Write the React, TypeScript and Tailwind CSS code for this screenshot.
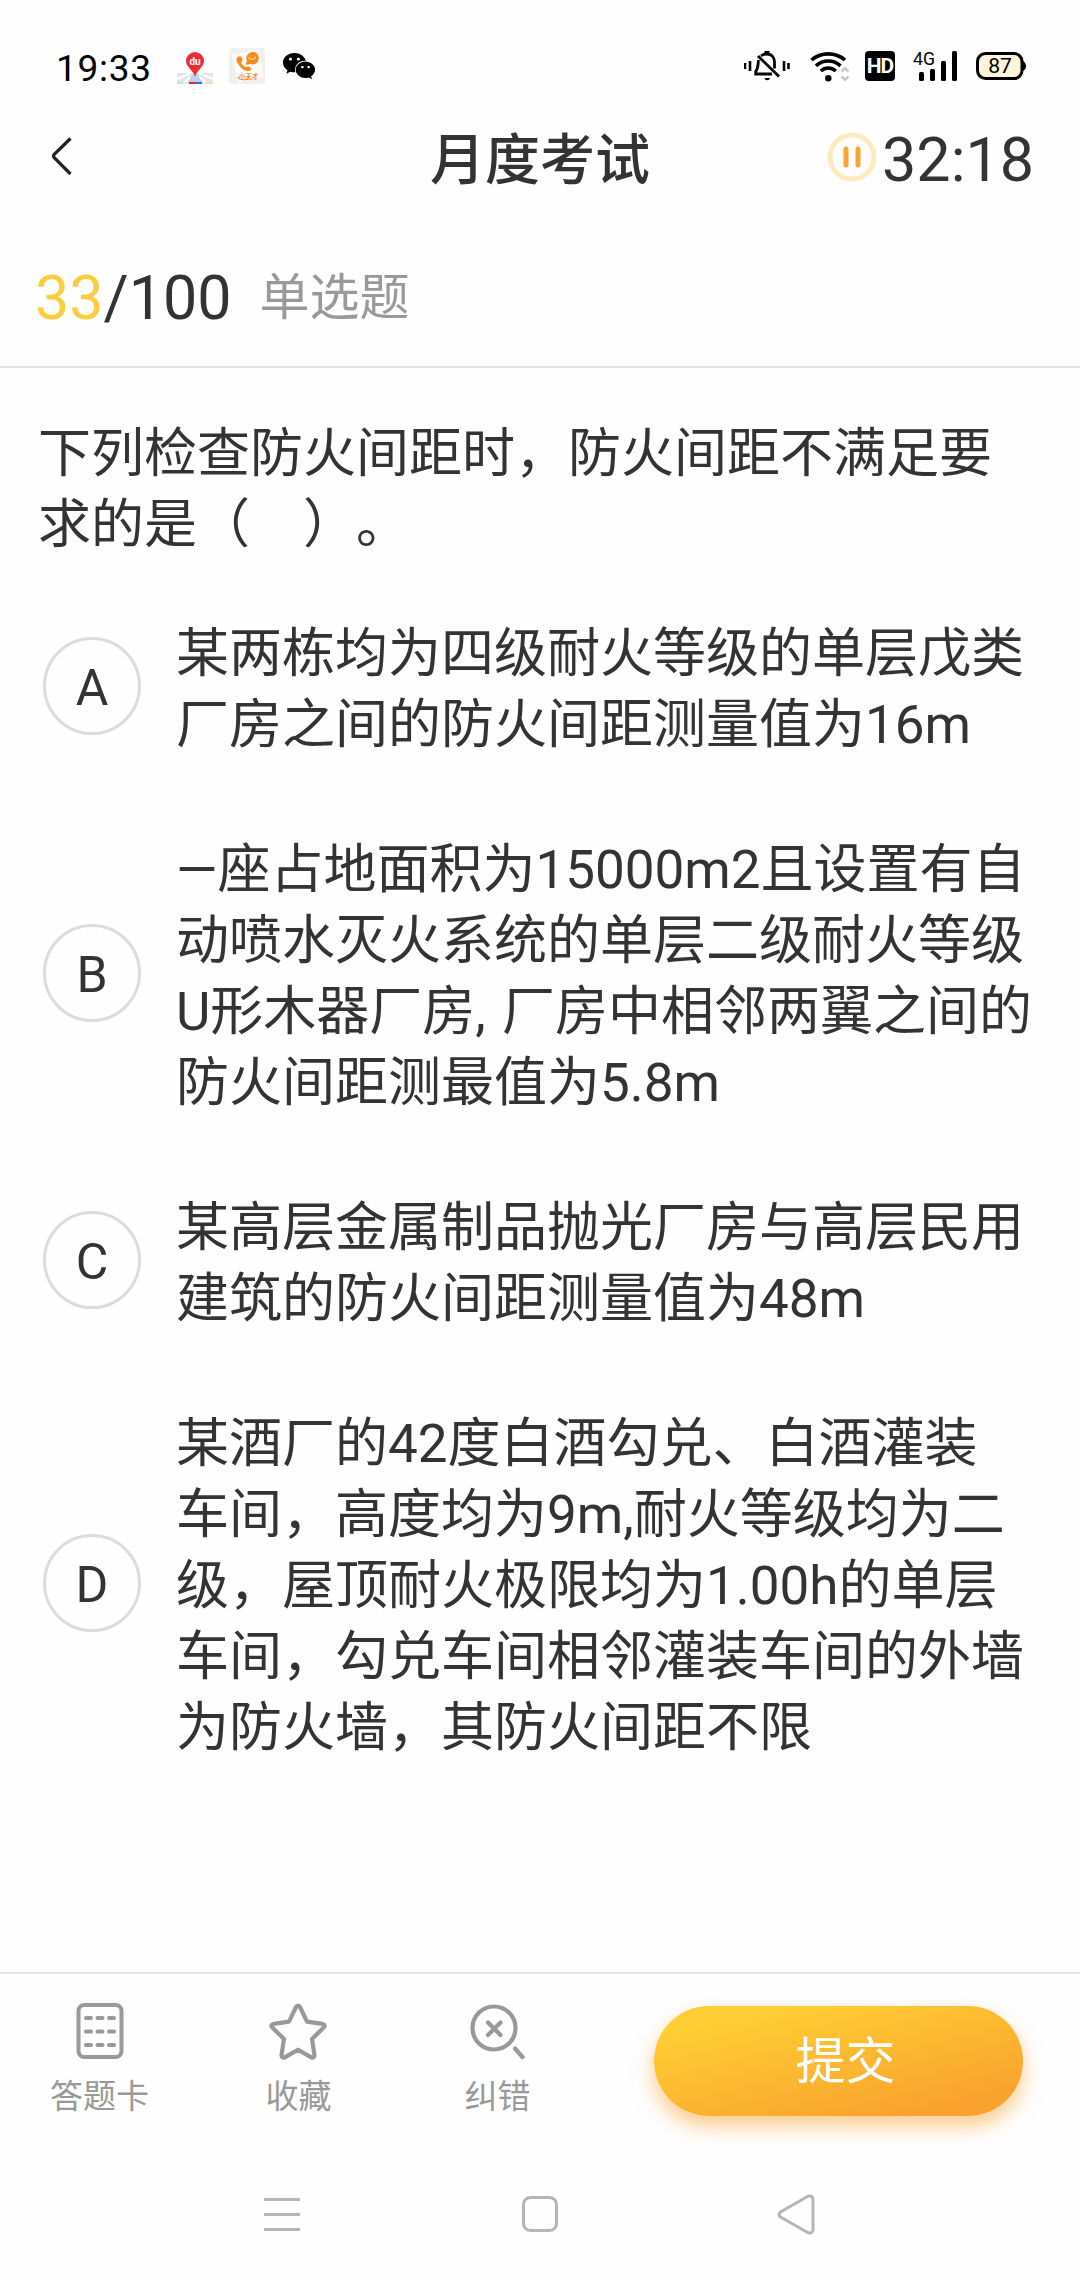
import type { ReactNode } from "react";
import { FaWeixin } from "react-icons/fa";

type Option = {
  key: string;
  lines: string[];
};

const questionLines = ["下列检查防火间距时，防火间距不满足要", "求的是（　）。"];

const options: Option[] = [
  {
    key: "A",
    lines: ["某两栋均为四级耐火等级的单层戊类", "厂房之间的防火间距测量值为16m"],
  },
  {
    key: "B",
    lines: [
      "—座占地面积为15000m2且设置有自",
      "动喷水灭火系统的单层二级耐火等级",
      "U形木器厂房, 厂房中相邻两翼之间的",
      "防火间距测最值为5.8m",
    ],
  },
  {
    key: "C",
    lines: ["某高层金属制品抛光厂房与高层民用", "建筑的防火间距测量值为48m"],
  },
  {
    key: "D",
    lines: [
      "某酒厂的42度白酒勾兑、白酒灌装",
      "车间，高度均为9m,耐火等级均为二",
      "级，屋顶耐火极限均为1.00h的单层",
      "车间，勾兑车间相邻灌装车间的外墙",
      "为防火墙，其防火间距不限",
    ],
  },
];

function MapIcon() {
  return (
    <svg width="36" height="36" viewBox="0 0 36 36">
      <path d="M0 25h36v11H0z" fill="#e4e5ea" />
      <path d="M0 31L14 25M36 31L22 25M5 36l10-8M31 36l-10-8" stroke="#fff" strokeWidth="2" />
      <path d="M0 34h8l-2 2H0z" fill="#bfe3f2" />
      <path d="M28 34h8v2h-7z" fill="#d6ecc0" />
      <path d="M15 26h6l4 9H11z" fill="#b4d6ea" />
      <path d="M12 34h6v2h-6z" fill="#e3262e" />
      <path d="M18 34h7v2h-7z" fill="#2f6fe0" />
      <path d="M18 29C17 23 9 19 9 13a9 9 0 0 1 18 0c0 6-8 10-9 16z" fill="#ee2b33" />
      <text x="18" y="17" textAnchor="middle" fontSize="10" fontWeight="700" fill="#fff" fontFamily="Roboto, sans-serif">
        du
      </text>
    </svg>
  );
}

function WatchIcon() {
  return (
    <svg width="36" height="36" viewBox="0 0 36 36">
      <rect width="36" height="36" rx="3" fill="#f0f1ec" />
      <path d="M3 7L30 1l5 27-26 7z" fill="#fbfbf8" />
      <path
        d="M7.5 10.500c1.500-2.500 4.500-3 5.500-.5 1 2.300 0 3.500-1 4.500 1 2.500 3 4 5 4.500 2-1.500 5.500.5 5.500 2.500-3 3-8.500 1-11.500-3-2.500-3-4-5.500-3.500-8z"
        fill="#f98a1c"
      />
      <path d="M23 4a6.200 6.200 0 1 1-1.500 12l-5 .8 1.500-4A6.200 6.200 0 0 1 23 4z" fill="#f98a1c" />
      <path d="M19.500 9.500c1.500 2.500 5.500 2.500 7.500-.5" stroke="#fff" strokeWidth="1" fill="none" />
      <text x="19.500" y="30.500" textAnchor="middle" fontSize="6.500" fontWeight="700" fill="#f28a2a" fontFamily="Noto Sans CJK SC, sans-serif">
        小天才
      </text>
      <path d="M8 29c2 3 8 3.500 12 2" stroke="#f28a2a" strokeWidth="1" fill="none" />
    </svg>
  );
}

function MutedBellIcon() {
  return (
    <svg width="46" height="30" viewBox="0 0 46 30" fill="none" stroke="#000">
      <path d="M1 12v6M6 10v10M40 10v10M44.500 12v6" strokeWidth="2.600" />
      <path d="M17 4.800C19 3.400 21 3 22.800 3c5.200 0 7.700 3.800 7.700 8v6.500M14.500 9c-.6 5-.2 8-2.800 11.500V23H28" strokeWidth="2.800" />
      <path d="M20.500 1.500h5" strokeWidth="3" />
      <path d="M14 5l21 20.500" strokeWidth="2.800" />
      <path d="M20.500 27h5.500a2.800 2.800 0 0 1-5.500 0z" fill="#000" stroke="none" />
    </svg>
  );
}

function WifiIcon() {
  return (
    <svg width="40" height="31" viewBox="0 0 40 31" fill="none">
      <path d="M1.500 9C11 .8 25.500.8 35 9" stroke="#000" strokeWidth="3.600" />
      <path d="M6 14.800c7-6.400 17.500-6.400 24.500 0" stroke="#000" strokeWidth="3.600" />
      <path d="M10.800 20c4.500-4 10.500-4 15 0" stroke="#000" strokeWidth="3.600" />
      <circle cx="18.300" cy="27.200" r="3.200" fill="#000" />
      <path d="M31.500 20.500l3.500-3.200 3.500 3.200M31.500 25.500l3.500 3.200 3.500-3.200" stroke="#c8c8c8" strokeWidth="2.600" />
    </svg>
  );
}

function SignalIcon() {
  return (
    <svg width="45" height="38" viewBox="0 -4 45 38">
      <text x="0" y="14" fontSize="18.500" textLength="22" lengthAdjust="spacingAndGlyphs" fontFamily="Roboto, sans-serif">
        4G
      </text>
      <rect x="6" y="21" width="5" height="9" rx="1.500" />
      <rect x="17" y="18" width="5" height="12" rx="1.500" />
      <rect x="28" y="10" width="5" height="20" rx="1.500" />
      <rect x="39" y="0" width="5" height="30" rx="1.500" />
    </svg>
  );
}

function BatteryIcon() {
  return (
    <svg width="50" height="28" viewBox="0 0 50 28">
      <rect x="1.500" y="1.500" width="44.500" height="25" rx="8" fill="#fff4dc" stroke="#000" strokeWidth="3" />
      <path d="M47 9c4 2 4 8 0 10z" />
      <text x="24" y="21" textAnchor="middle" fontSize="21" fontFamily="Roboto, sans-serif">
        87
      </text>
    </svg>
  );
}

function StatusBar() {
  return (
    <div className="flex h-[132px] items-center pr-[54px] pl-[56px]">
      <span className="w-[121px] pt-1 text-[37px] leading-none tracking-[0.7px] text-black">19:33</span>
      <MapIcon />
      <span className="ml-4">
        <WatchIcon />
      </span>
      <FaWeixin className="ml-[17px] h-[30px] w-[34px] text-black" />
      <div className="ml-auto flex items-center">
        <MutedBellIcon />
        <span className="ml-5">
          <WifiIcon />
        </span>
        <span className="ml-[15px] flex size-[30px] items-center justify-center rounded-[4px] bg-black text-[21px] leading-none font-bold tracking-[-1px] text-white">
          HD
        </span>
        <span className="ml-[18px]">
          <SignalIcon />
        </span>
        <span className="ml-[18px]">
          <BatteryIcon />
        </span>
      </div>
    </div>
  );
}

function Header() {
  return (
    <header className="-mt-0.5 grid h-[54px] grid-cols-3 items-center pr-[46px] pl-[48px]">
      <svg className="mb-3.5" width="24" height="40" viewBox="0 0 24 40" fill="none" stroke="#222" strokeWidth="3.200">
        <path d="M22.500 2.500L6 18.500a2.500 2.500 0 0 0 0 3L22.500 38" />
      </svg>
      <h1 className="pr-0.5 pb-1 text-center text-[55px] leading-none font-medium">月度考试</h1>
      <div className="flex items-center justify-end gap-1.5 pb-1">
        <svg className="mb-2" width="50" height="50" viewBox="0 0 50 50">
          <circle cx="26" cy="25" r="22" fill="none" stroke="#fdebc0" strokeWidth="5" />
          <path d="M20 17v16M32 17v16" stroke="#f6a731" strokeWidth="5" strokeLinecap="round" />
        </svg>
        <span className="text-[61px] leading-none">32:18</span>
      </div>
    </header>
  );
}

function OptionRow({ option }: { option: Option }) {
  return (
    <li className="flex items-center">
      <span className="mb-1 flex size-[98px] shrink-0 items-center justify-center rounded-full border-[3px] border-[#dcdcdc] pt-1 text-[50px] leading-none">
        {option.key}
      </span>
      <p className="ml-[35px] text-[53px] leading-[71px] whitespace-nowrap [word-spacing:3px]">
        {option.lines.map((line) => (
          <span key={line} className="block translate-y-[2px]">
            {line}
          </span>
        ))}
      </p>
    </li>
  );
}

function ToolButton({ label, children }: { label: string; children: ReactNode }) {
  return (
    <button className="flex w-[199px] flex-col items-center gap-4 text-[33px] leading-[40px] text-[#999]">
      {children}
      {label}
    </button>
  );
}

function BottomBar() {
  return (
    <footer className="flex h-[166px] border-t-2 border-[#e4e4e4] pt-[29px]">
      <div className="flex">
        <ToolButton label="答题卡">
          <svg width="58" height="58" viewBox="0 0 58 58" fill="none" stroke="#999" strokeWidth="4">
            <rect x="7.500" y="2" width="43" height="52" rx="6" />
            <path d="M15 15h5M26.500 15h5M38 15h5M15 28.500h5M26.500 28.500h5M38 28.500h5M15 42h5M26.500 42h5M38 42h5" strokeLinecap="round" />
          </svg>
        </ToolButton>
        <ToolButton label="收藏">
          <svg className="-ml-0.5" width="58" height="58" viewBox="0 0 58 58" fill="none" stroke="#999" strokeWidth="4.200" strokeLinejoin="round">
            <path d="M27 4q2-3 4 0l7 14.700 15.500 2.200q3.500 1 1.200 3.600L43 36 45.500 52.200q0 3-3.200 2.200L29 46.700 15.700 54.400q-3.200.8-3.200-2.200L15 36 3.300 24.500q-2.300-2.600 1.200-3.600L20 18.700z" />
          </svg>
        </ToolButton>
        <ToolButton label="纠错">
          <svg width="58" height="58" viewBox="0 0 58 58" fill="none" stroke="#999" strokeWidth="4.200" strokeLinecap="round">
            <circle cx="25" cy="25" r="21.500" />
            <path d="M19 19.500l12.500 12.500M31.500 19.500L19 32M46 45.500l7.500 8.500" />
          </svg>
        </ToolButton>
      </div>
      <button className="mt-[3px] ml-[57px] flex h-[110px] w-[369px] items-center justify-center rounded-full bg-[linear-gradient(167deg,#ffce34_15%,#f9a32e_85%)] pt-0.5 pl-3.5 text-[50px] leading-none text-white shadow-[0_10px_20px_rgba(249,163,46,0.55)]">
        提交
      </button>
    </footer>
  );
}

function SystemNav() {
  return (
    <nav className="flex h-[142px] items-center justify-between pt-[12px] pr-[265px] pl-[263px]">
      <svg width="38" height="42" viewBox="0 0 38 42" stroke="#b5b5b5" strokeWidth="3">
        <path d="M1 5.500h36M1 20.500h36M1 35.500h36" />
      </svg>
      <svg width="38" height="42" viewBox="0 0 38 42" fill="none" stroke="#b5b5b5" strokeWidth="3">
        <rect x="3.500" y="3.500" width="33" height="33" rx="7" />
      </svg>
      <svg width="38" height="42" viewBox="0 0 38 42" fill="none" stroke="#b5b5b5" strokeWidth="3">
        <path d="M31 2.300L3.500 18q-3 2.500 0 5L31 38.700q4.500 1.300 5-3V5.300q-.5-4.300-5-3z" />
      </svg>
    </nav>
  );
}

export default function App() {
  return (
    <div className="flex h-[2280px] w-[1080px] flex-col overflow-hidden bg-[#fefefe] font-[Roboto,'Noto_Sans_CJK_SC',sans-serif] text-[#333] [text-spacing-trim:space-all]">
      <StatusBar />
      <Header />
      <div className="flex h-[184px] items-center border-b-2 border-[#e2e2e2] pt-[46px] pl-[35px] leading-none">
        <span className="text-[61px]">
          <span className="text-[#fccd3e]">33</span>/100
        </span>
        <span className="ml-7 text-[50px] text-[#999]">单选题</span>
      </div>
      <main className="flex-1 pt-[51px] pl-[43px]">
        <p className="-ml-[5px] text-[53px] leading-[71px] whitespace-nowrap">
          {questionLines.map((line) => (
            <span key={line} className="block">
              {line}
            </span>
          ))}
        </p>
        <ul className="mt-[56px] flex flex-col gap-[74px]">
          {options.map((option) => (
            <OptionRow key={option.key} option={option} />
          ))}
        </ul>
      </main>
      <BottomBar />
      <SystemNav />
    </div>
  );
}
